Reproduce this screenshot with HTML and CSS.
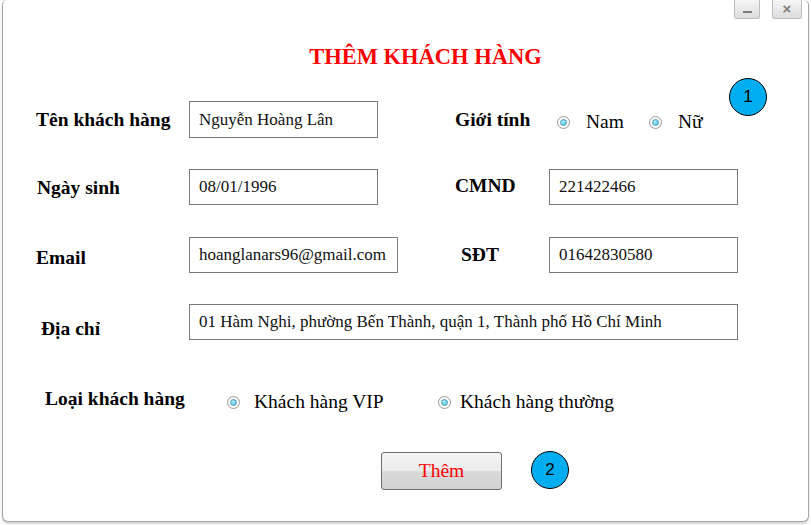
FILE: index.html
```html
<!DOCTYPE html>
<html lang="vi">
<head>
<meta charset="utf-8">
<title>Thêm khách hàng</title>
<link rel="stylesheet" href="styles.css">
</head>
<body>
<div class="window">
  <div class="titlebar">
    <span class="tb-btn tb-min"><span class="min-bar"></span></span>
    <span class="tb-btn tb-close">&#215;</span>
  </div>
  <h1 class="title">THÊM KHÁCH HÀNG</h1>

  <div class="row row-1">
    <label class="lbl lbl-name">Tên khách hàng</label>
    <input class="field field-sm" type="text" value="Nguyễn Hoàng Lân">
    <label class="lbl lbl-gender">Giới tính</label>
    <div class="opts opts-gender">
      <span class="opt opt-nam"><span class="radio"></span><span class="opt-text">Nam</span></span>
      <span class="opt opt-nu"><span class="radio"></span><span class="opt-text">Nữ</span></span>
    </div>
  </div>

  <div class="row row-2">
    <label class="lbl lbl-dob">Ngày sinh</label>
    <input class="field field-sm" type="text" value="08/01/1996">
    <label class="lbl lbl-cmnd">CMND</label>
    <input class="field field-sm" type="text" value="221422466">
  </div>

  <div class="row row-3">
    <label class="lbl lbl-email">Email</label>
    <input class="field field-email" type="text" value="hoanglanars96@gmail.com">
    <label class="lbl lbl-sdt">SĐT</label>
    <input class="field field-sm" type="text" value="01642830580">
  </div>

  <div class="row row-4">
    <label class="lbl lbl-addr">Địa chỉ</label>
    <input class="field field-wide" type="text" value="01 Hàm Nghi, phường Bến Thành, quận 1, Thành phố Hồ Chí Minh">
  </div>

  <div class="row row-5">
    <label class="lbl lbl-type">Loại khách hàng</label>
    <span class="opt opt-vip"><span class="radio"></span><span class="opt-text">Khách hàng VIP</span></span>
    <span class="opt opt-normal"><span class="radio"></span><span class="opt-text">Khách hàng thường</span></span>
  </div>

  <div class="row row-btn">
    <button class="btn" type="button">Thêm</button>
  </div>

  <span class="badge badge-1">1</span>
  <span class="badge badge-2">2</span>
</div>
</body>
</html>
```

FILE: styles.css
```css
html, body {
  margin: 0;
  padding: 0;
  background: #ffffff;
}

body {
  width: 811px;
  height: 525px;
  overflow: hidden;
  font-family: "Liberation Serif", "Times New Roman", serif;
  color: #000;
}

.window {
  position: relative;
  box-sizing: border-box;
  margin-left: 2px;
  width: 807px;
  height: 522px;
  background: #fff;
  border: 1px solid #a6a6a6;
  border-top: none;
  border-radius: 5px 5px 6px 6px;
  box-shadow: 0 2px 2px #d4d4d4;
}

/* title bar buttons */
.titlebar {
  height: 19px;
  display: flex;
  justify-content: flex-end;
  align-items: flex-start;
  gap: 12px;
  padding-right: 6px;
}

.tb-btn {
  box-sizing: border-box;
  height: 19px;
  border: 1px solid #bdbdbd;
  border-top: none;
  border-radius: 0 0 3px 3px;
  background: linear-gradient(#f6f6f6, #dcdcdc);
  color: #808080;
  font-family: "Liberation Sans", Arial, sans-serif;
  font-weight: bold;
  display: flex;
  align-items: center;
  justify-content: center;
}

.tb-min {
  width: 26px;
  align-items: flex-end;
  padding-bottom: 5px;
}

.min-bar {
  display: block;
  width: 9px;
  height: 2px;
  background: #7c7c7c;
}

.tb-close {
  width: 30px;
  font-size: 15px;
  padding-bottom: 1px;
}

/* heading */
.title {
  margin: 25px 0 0 0;
  padding-left: 40px;
  height: 26px;
  line-height: 26px;
  text-align: center;
  font-size: 22.5px;
  font-weight: bold;
  color: #ff0000;
}

/* rows */
.row {
  display: flex;
  align-items: center;
  height: 36px;
}

.row-1 { margin-top: 31px; height: 37px; }
.row-2 { margin-top: 31px; }
.row-3 { margin-top: 32px; }
.row-4 { margin-top: 31px; }
.row-5 { margin-top: 42px; }
.row-btn { margin-top: 34px; height: 38px; }

.lbl {
  flex: none;
  box-sizing: border-box;
  font-size: 19.5px;
  font-weight: bold;
  white-space: nowrap;
}

.lbl-name   { margin-left: 33px; width: 153px; }
.lbl-dob    { margin-left: 34px; width: 152px; padding-top: 2px; }
.lbl-email  { margin-left: 33px; width: 153px; padding-top: 6px; }
.lbl-addr   { margin-left: 38px; width: 148px; padding-top: 14px; }
.lbl-type   { margin-left: 42px; width: 182px; padding-bottom: 3px; }
.lbl-gender { margin-left: 77px; width: 102px; }
.lbl-cmnd   { margin-left: 77px; width: 94px; padding-bottom: 2px; }
.lbl-sdt    { margin-left: 63px; width: 88px; }

.field {
  flex: none;
  box-sizing: border-box;
  height: 36px;
  margin: 0;
  padding: 0 0 0 9px;
  border: 1px solid #7a7a7a;
  border-radius: 0;
  background: #fff;
  font-family: "Liberation Serif", "Times New Roman", serif;
  font-size: 17px;
  color: #111;
  outline: none;
}

.row-1 .field { height: 37px; }
.field-sm    { width: 189px; }
.field-email { width: 209px; }
.field-wide  { width: 549px; }

/* radio options */
.opts {
  display: flex;
  align-items: center;
}

.opts-gender { padding-top: 5px; }

.opt {
  flex: none;
  display: flex;
  align-items: center;
  font-size: 19.5px;
  white-space: nowrap;
}

.radio {
  flex: none;
  position: relative;
  box-sizing: border-box;
  width: 13px;
  height: 13px;
  border-radius: 50%;
  border: 1px solid #9c9c9c;
  background: radial-gradient(circle, #ffffff 55%, #e6e6e6 100%);
}

.radio::after {
  content: "";
  position: absolute;
  left: 2px;
  top: 2px;
  width: 7px;
  height: 7px;
  box-sizing: border-box;
  border-radius: 50%;
  border: 1px solid #4a9fb8;
  background: radial-gradient(circle at 40% 35%, #b6ecfa, #5fc6e4 70%);
}

.opt-nam { width: 92px; }
.opt-nam .opt-text { margin-left: 16px; }
.opt-nu .opt-text { margin-left: 16px; }

.opt-vip { width: 211px; padding-top: 4px; }
.opt-vip .opt-text { margin-left: 14px; }
.opt-normal { padding-top: 4px; }
.opt-normal .opt-text { margin-left: 9px; }

/* button */
.btn {
  margin-left: 378px;
  box-sizing: border-box;
  width: 121px;
  height: 38px;
  padding: 0;
  border: 1px solid #6e6e6e;
  border-radius: 3px;
  background: linear-gradient(#f4f4f4 0%, #ececec 48%, #dadada 52%, #d2d2d2 100%);
  font-family: "Liberation Serif", "Times New Roman", serif;
  font-size: 19.5px;
  color: #ff0000;
  line-height: 1;
}

/* annotation badges */
.badge {
  position: absolute;
  box-sizing: border-box;
  width: 38px;
  height: 38px;
  border-radius: 50%;
  border: 1px solid #000;
  background: #00aeef;
  font-family: "Liberation Sans", Arial, sans-serif;
  font-size: 17px;
  color: #000;
  display: flex;
  align-items: center;
  justify-content: center;
}

.badge-1 { left: 726px; top: 78px; }
.badge-2 { left: 528px; top: 451px; }
```
